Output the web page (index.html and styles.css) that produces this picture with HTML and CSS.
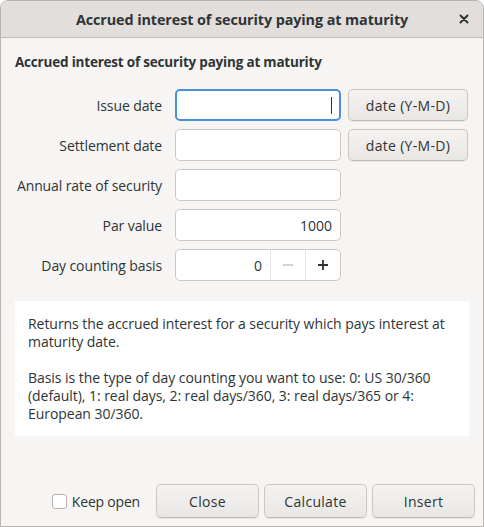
FILE: index.html
```html
<!DOCTYPE html>
<html>
<head>
<meta charset="utf-8">
<link rel="stylesheet" href="styles.css">
</head>
<body>
<div class="window">
  <div class="titlebar">
    <span class="title">Accrued interest of security paying at maturity</span>
    <span class="close">
      <svg width="10" height="10" viewBox="0 0 10 10"><path d="M1.5 1.5 L8.5 8.5 M8.5 1.5 L1.5 8.5" stroke="#2e3436" stroke-width="2" stroke-linecap="round"/></svg>
    </span>
  </div>
  <div class="content">
    <div class="heading">Accrued interest of security paying at maturity</div>
    <div class="form">
      <label class="lbl">Issue date</label>
      <div class="input focused"><span class="caret"></span></div>
      <button class="btn">date (Y-M-D)</button>

      <label class="lbl">Settlement date</label>
      <div class="input"></div>
      <button class="btn">date (Y-M-D)</button>

      <label class="lbl">Annual rate of security</label>
      <div class="input"></div>
      <span></span>

      <label class="lbl">Par value</label>
      <div class="input num">1000</div>
      <span></span>

      <label class="lbl">Day counting basis</label>
      <div class="spin">
        <div class="spin-val">0</div>
        <div class="spin-btn dim">
          <svg width="12" height="12" viewBox="0 0 12 12"><path d="M1 6 H11" stroke="#c9c6c2" stroke-width="1.6"/></svg>
        </div>
        <div class="spin-btn">
          <svg width="12" height="12" viewBox="0 0 12 12"><path d="M1 6 H11 M6 1 V11" stroke="#2e3436" stroke-width="1.8"/></svg>
        </div>
      </div>
      <span></span>
    </div>
    <div class="desc">
      <p>Returns the accrued interest for a security which pays interest at maturity date.</p>
      <p>Basis is the type of day counting you want to use: 0: US 30/360 (default), 1: real days, 2: real days/360, 3: real days/365 or 4: European 30/360.</p>
    </div>
    <div class="footer">
      <label class="check"><span class="box"></span>Keep open</label>
      <button class="btn fbtn">Close</button>
      <button class="btn fbtn">Calculate</button>
      <button class="btn fbtn">Insert</button>
    </div>
  </div>
</div>
</body>
</html>
```
FILE: styles.css
```css
html, body {
  margin: 0;
  padding: 0;
  background: #ffffff;
}
body {
  font-family: "Open Sans", "Noto Sans", sans-serif;
  color: #2e3436;
  font-size: 14px;
}
.window {
  width: 484px;
  height: 527px;
  box-sizing: border-box;
  border: 1px solid #b7b4b0;
  border-radius: 8px 8px 0 0;
  background: #f6f5f4;
  display: flex;
  flex-direction: column;
  overflow: hidden;
}
.titlebar {
  height: 36px;
  flex: none;
  background: #e1dedb;
  border-bottom: 1px solid #c1bdb9;
  display: flex;
  align-items: center;
  justify-content: center;
  position: relative;
}
.title {
  font-weight: bold;
  font-size: 14.4px;
  letter-spacing: -0.1px;
}
.close {
  position: absolute;
  right: 14px;
  top: 13px;
  width: 10px;
  height: 10px;
  display: flex;
}
.content {
  flex: 1;
  display: flex;
  flex-direction: column;
  padding: 14px 14px 8px 14px;
}
.heading {
  font-weight: bold;
  font-size: 13.5px;
  height: 20px;
  line-height: 20px;
  letter-spacing: -0.2px;
  margin-bottom: 17px;
}
.form {
  display: grid;
  grid-template-columns: 153px 166px 120px;
  grid-auto-rows: 32px;
  column-gap: 7px;
  row-gap: 8px;
}
.lbl {
  display: flex;
  align-items: center;
  justify-content: flex-end;
  padding-right: 6px;
  white-space: nowrap;
  letter-spacing: -0.1px;
}
.input {
  box-sizing: border-box;
  background: #ffffff;
  border: 1px solid #cdc7c2;
  border-radius: 5px;
  display: flex;
  align-items: center;
  justify-content: flex-end;
  padding-right: 8px;
}
.input.focused {
  border: 2px solid #4a90d9;
  padding-right: 7px;
}
.caret {
  width: 1px;
  height: 17px;
  background: #2e3436;
}
.num {
  font-size: 14px;
}
.btn {
  box-sizing: border-box;
  font-family: inherit;
  font-size: 14px;
  color: #2e3436;
  background: linear-gradient(#f4f3f2, #e9e7e4);
  border: 1px solid #cdc7c2;
  border-bottom-color: #bfb8b1;
  border-radius: 5px;
  box-shadow: 0 1px 1px rgba(0,0,0,0.06);
  padding: 0;
  letter-spacing: 0.3px;
}
.spin {
  box-sizing: border-box;
  background: #ffffff;
  border: 1px solid #cdc7c2;
  border-radius: 5px;
  display: flex;
}
.spin-val {
  flex: 1;
  display: flex;
  align-items: center;
  justify-content: flex-end;
  padding-right: 8px;
  font-size: 14px;
}
.spin-btn {
  width: 34px;
  border-left: 1px solid #e6e3e0;
  display: flex;
  align-items: center;
  justify-content: center;
}
.desc {
  margin-top: 20px;
  background: #ffffff;
  padding: 14px 12px 13px 13px;
  line-height: 18px;
  font-size: 14px;
  letter-spacing: -0.05px;
}
.desc p {
  margin: 0;
}
.desc p + p {
  margin-top: 18px;
}
.footer {
  margin-top: auto;
  margin-right: -6px;
  display: flex;
  align-items: center;
  justify-content: flex-end;
  gap: 5px;
}
.check {
  display: flex;
  align-items: center;
  margin-right: 11px;
  letter-spacing: -0.2px;
}
.box {
  box-sizing: border-box;
  width: 15px;
  height: 15px;
  border: 1px solid #b8b2ac;
  border-radius: 3px;
  background: #ffffff;
  margin-right: 5px;
}
.fbtn {
  width: 103px;
  height: 34px;
}
```
